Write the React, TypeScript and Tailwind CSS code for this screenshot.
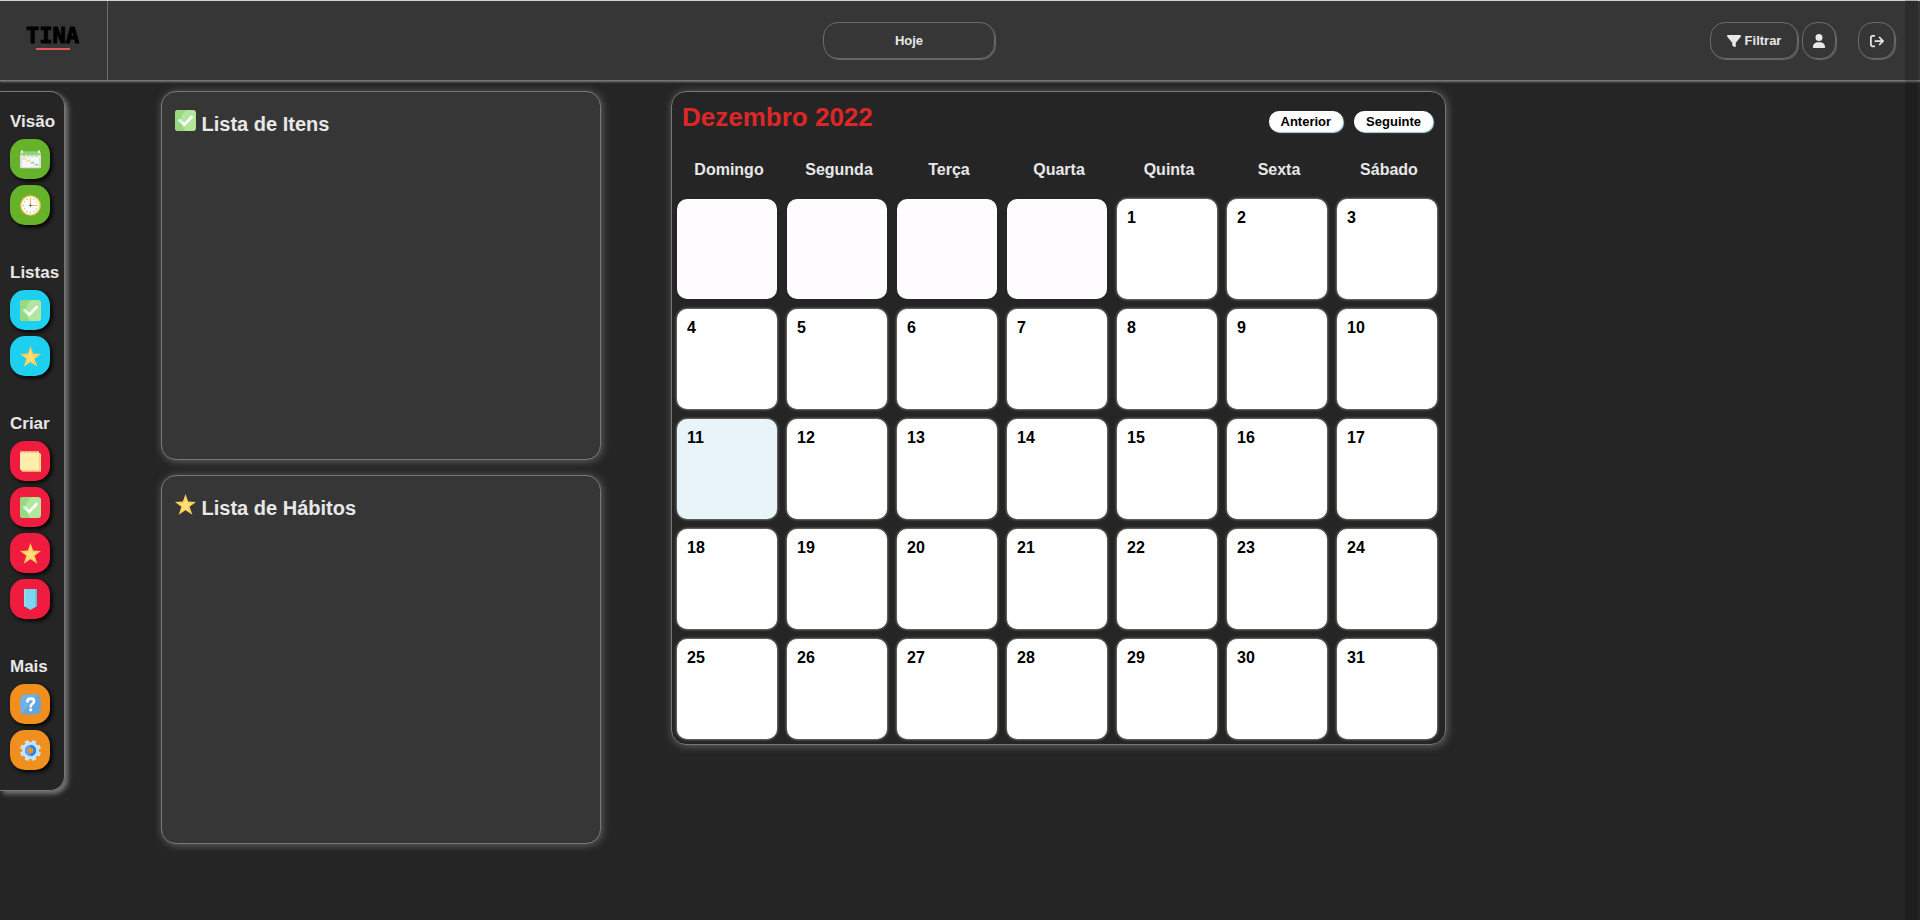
import type { ReactNode } from "react";
import { FaArrowRightFromBracket, FaFilter, FaUser } from "react-icons/fa6";

type IconProps = { className?: string };

const ICON = "size-[21px]";

function CheckIcon({ className = ICON }: IconProps) {
  return (
    <svg viewBox="0 0 63 63" className={className} aria-hidden="true">
      <rect width="63" height="63" rx="9" fill="#b2e69c" />
      <path d="M9 0h27C25 6 18 17 18 30s6 25 13 33H9a9 9 0 0 1-9-9V9a9 9 0 0 1 9-9z" fill="#98d97f" />
      <path d="M14 31l14 13 22-23" fill="none" stroke="#fff" strokeWidth="8" strokeLinecap="round" />
      <path d="M13 31l5 5" stroke="#c9f7f5" strokeWidth="8" strokeLinecap="round" />
    </svg>
  );
}

function StarIcon({ className = ICON }: IconProps) {
  return (
    <svg viewBox="0 0 63 63" className={className} aria-hidden="true">
      <path d="M31.5 0l8 22.5L63 24 44 38.5l8 23.5L31.5 49 11 62l8-23.5L0 24l23.5-1.5z" fill="#fbce5c" />
      <path d="M31.5 13l5 15 14 1-12 9 4 14-11-8-11 8 4-14-12-9 14-1z" fill="#ffdf7c" />
    </svg>
  );
}

function CalendarIcon() {
  return (
    <svg viewBox="0 0 63 63" className={ICON} aria-hidden="true">
      <rect y="8" width="63" height="50" rx="4" fill="#dedee6" />
      <path d="M0 12a4 4 0 0 1 4-4h55a4 4 0 0 1 4 4v6H0z" fill="#8fd67a" />
      <rect x="3" y="4" width="6" height="9" rx="2" fill="#ededf2" />
      <rect x="54" y="4" width="6" height="9" rx="2" fill="#ededf2" />
      <rect x="7" y="20" width="50" height="34" fill="#f8f8fb" />
      <path d="M9 21h8M21 21h8M33 21h8M45 21h9" stroke="#86c878" strokeWidth="3" />
      <path d="M9 29h9M21 35h9" stroke="#fadb84" strokeWidth="6" />
      <path d="M33 41h9M45 47h10" stroke="#a4dc90" strokeWidth="6" />
      <path d="M19 25v28M31 25v28M43 25v28" stroke="#e7e7ee" strokeWidth="2" />
    </svg>
  );
}

function ClockIcon() {
  const marks = [0, 30, 60, 90, 120, 150, 180, 210, 240, 270, 300, 330];
  return (
    <svg viewBox="0 0 63 63" className={ICON} aria-hidden="true">
      <circle cx="31.5" cy="31.5" r="31" fill="#fbc94e" />
      <circle cx="31.5" cy="31.5" r="27" fill="#fdfdff" />
      {marks.map((angle) => (
        <circle key={angle} cx="31.5" cy="10.5" r="1.6" fill="#8b8b95" transform={`rotate(${angle} 31.5 31.5)`} />
      ))}
      <path d="M31.5 9v20M34 31.5h20" stroke="#fbc03a" strokeWidth="3.5" />
      <path d="M31.5 26v11M26 31.5h11" stroke="#50505a" strokeWidth="2" />
    </svg>
  );
}

function NoteIcon() {
  return (
    <svg viewBox="0 0 63 63" className={ICON} aria-hidden="true">
      <rect x="6" y="8" width="57" height="54" fill="#e6e88a" />
      <rect x="3" y="6" width="57" height="53" fill="#f8cf80" />
      <rect y="1" width="57" height="55" fill="#ffedae" />
      <path d="M0 3h57" stroke="#f6a06a" strokeWidth="4" strokeDasharray="7 4" />
    </svg>
  );
}

function BookmarkIcon() {
  return (
    <svg viewBox="0 0 63 63" className={ICON} aria-hidden="true">
      <path d="M12 0h39v51L31.5 63 12 51z" fill="#7dd6ef" />
      <path d="M46 0h5v51l-5 3z" fill="#58bfe0" />
      <path d="M12 0h4v53l-4-2z" fill="#94e0f4" />
    </svg>
  );
}

function QuestionIcon() {
  return (
    <svg viewBox="0 0 63 63" className={ICON} aria-hidden="true">
      <path d="M10 3c14-3 29-3 43 0 4 1 6 4 7 7 4 14 4 29 0 43-1 3-3 6-7 7-14 3-29 3-43 0-4-1-6-4-7-7-4-14-4-29 0-43 1-3 3-6 7-7z" fill="#62a6dc" />
      <path d="M10 3c14-3 29-3 43 0L6 57c-2-1-3-3-3-4-4-14-4-29 0-43 1-3 3-6 7-7z" fill="#72b1e4" />
      <path d="M22 22c1-11 20-11 20 0 0 8-10 8-10 15" fill="none" stroke="#fff" strokeWidth="8" strokeLinecap="round" />
      <circle cx="32" cy="47.5" r="5" fill="#fff" />
    </svg>
  );
}

function GearIcon() {
  const teeth = [22.5, 67.5, 112.5, 157.5, 202.5, 247.5, 292.5, 337.5];
  return (
    <svg viewBox="0 0 63 63" className={ICON} aria-hidden="true">
      {teeth.map((angle) => (
        <rect key={angle} x="25" y="0" width="13" height="14" rx="2" fill="#c5e4fa" transform={`rotate(${angle} 31.5 31.5)`} />
      ))}
      <circle cx="31.5" cy="31.5" r="20" fill="none" stroke="#c5e4fa" strokeWidth="11" />
      <circle cx="31.5" cy="31.5" r="13" fill="none" stroke="#5b9cf8" strokeWidth="8" />
      <path d="M31.5 18.5a13 13 0 0 1 0 26" fill="none" stroke="#1e86f5" strokeWidth="8" />
    </svg>
  );
}

type Action = { label: string; icon: ReactNode };
type Group = { title: string; color: string; actions: Action[] };

const groups: Group[] = [
  {
    title: "Visão",
    color: "bg-[#66b22a]",
    actions: [
      { label: "Calendário", icon: <CalendarIcon /> },
      { label: "Dia", icon: <ClockIcon /> },
    ],
  },
  {
    title: "Listas",
    color: "bg-[#1dd0f0]",
    actions: [
      { label: "Lista de itens", icon: <CheckIcon /> },
      { label: "Lista de hábitos", icon: <StarIcon /> },
    ],
  },
  {
    title: "Criar",
    color: "bg-[#f01c40]",
    actions: [
      { label: "Criar nota", icon: <NoteIcon /> },
      { label: "Criar item", icon: <CheckIcon /> },
      { label: "Criar hábito", icon: <StarIcon /> },
      { label: "Criar marcador", icon: <BookmarkIcon /> },
    ],
  },
  {
    title: "Mais",
    color: "bg-[#f08e1e]",
    actions: [
      { label: "Ajuda", icon: <QuestionIcon /> },
      { label: "Configurações", icon: <GearIcon /> },
    ],
  },
];

const weekdays = ["Domingo", "Segunda", "Terça", "Quarta", "Quinta", "Sexta", "Sábado"];
const FIRST_WEEKDAY = 4;
const TODAY = 11;
const weeks = [0, 1, 2, 3, 4].map((week) =>
  weekdays.map((_, day) => week * 7 + day - FIRST_WEEKDAY + 1),
);

const headerButton =
  "flex h-[37px] items-center justify-center gap-1 rounded-[15px] border border-[#6c6c6c] text-[13px] font-bold shadow-[1px_1px_1px_#666]";
const navButton =
  "h-[21px] rounded-[10px] bg-white px-3 text-[13px] leading-[20px] font-bold text-black shadow-[1px_1px_1px_#add8e6]";

function Header() {
  return (
    <header className="flex h-[81px] items-center border-t border-b border-t-[#cfd2d0] border-b-[#777] bg-[#363636] shadow-[0_1px_2px_#777]">
      <a
        href="#"
        className="flex h-full w-[108px] shrink-0 flex-col items-center border-r border-[#6c6c6c] pt-[22px] pr-[2px] font-['DejaVu_Sans_Mono',monospace] text-[22px] leading-[25px] font-bold text-black [-webkit-text-stroke:1px_black]"
      >
        TINA
        <span className="h-[2px] w-[34px] bg-[#e4575d]" />
      </a>
      <div className="flex flex-1 justify-center">
        <button className={`${headerButton} w-[172px]`}>Hoje</button>
      </div>
      <div className="flex pr-[25px]">
        <button className={`${headerButton} w-[88px]`}>
          <FaFilter className="size-[14px]" />
          Filtrar
        </button>
        <button aria-label="Perfil" className={`${headerButton} ml-1 w-[34px]`}>
          <FaUser className="size-[14px]" />
        </button>
        <button aria-label="Sair" className={`${headerButton} ml-[22px] w-[37px]`}>
          <FaArrowRightFromBracket className="size-[14px]" />
        </button>
      </div>
    </header>
  );
}

function Sidebar() {
  return (
    <nav className="flex w-[65px] shrink-0 flex-col gap-[37px] rounded-r-[15px] border border-l-0 border-[#777] pt-[19px] pb-5 pl-[10px] shadow-[3px_3px_5px_#777]">
      {groups.map((group) => (
        <section key={group.title} className="flex flex-col gap-[6px]">
          <h2 className="text-[17px] leading-[22px] font-bold">{group.title}</h2>
          {group.actions.map((action) => (
            <button
              key={action.label}
              aria-label={action.label}
              className={`${group.color} flex size-10 items-center justify-center rounded-[15px] shadow-[2px_2px_4px_#000]`}
            >
              {action.icon}
            </button>
          ))}
        </section>
      ))}
    </nav>
  );
}

function ListCard({ title, icon }: { title: string; icon: ReactNode }) {
  return (
    <section className="h-[369px] rounded-[15px] border border-[#777] bg-[#363636] px-[13px] pt-[18px] shadow-[1px_1px_8px_#666]">
      <h2 className="text-xl leading-[24px] font-bold">
        {icon} {title}
      </h2>
    </section>
  );
}

function Calendar() {
  return (
    <section className="w-[775px] shrink-0 rounded-[15px] border border-[#777] shadow-[1px_1px_8px_#666]">
      <div className="flex h-[52px] items-start justify-between pr-[12px] pl-[10px]">
        <h1 className="pt-[9px] text-[26px] leading-[32px] font-bold text-[#dd2727]">Dezembro 2022</h1>
        <div className="flex gap-[11px] pt-[19px]">
          <button className={navButton}>Anterior</button>
          <button className={navButton}>Seguinte</button>
        </div>
      </div>
      <table className="border-collapse">
        <thead>
          <tr className="h-[50px]">
            {weekdays.map((name) => (
              <th key={name} scope="col" className="w-[110px] p-0 pt-[2px] pl-1 text-center text-base font-bold">
                {name}
              </th>
            ))}
          </tr>
        </thead>
        <tbody>
          {weeks.map((week) => (
            <tr key={week[0]}>
              {week.map((day) => (
                <td key={day} className="p-[5px]">
                  {day < 1 ? (
                    <div className="size-[100px] rounded-[10px] bg-[#fefcff]" />
                  ) : (
                    <div
                      className={`${day === TODAY ? "bg-[#e8f3fa]" : "bg-white"} size-[100px] rounded-[10px] p-[10px] text-base leading-[18px] font-bold text-black shadow-[0_0_3px_#c8c8b8]`}
                    >
                      {day}
                    </div>
                  )}
                </td>
              ))}
            </tr>
          ))}
        </tbody>
      </table>
    </section>
  );
}

export default function App() {
  return (
    <div className="relative min-h-screen bg-[#252525] font-['Liberation_Sans',Arial,sans-serif] text-[#e8e8e8]">
      <Header />
      <main className="flex items-start pt-[10px]">
        <Sidebar />
        <div className="ml-24 flex w-[440px] flex-col gap-[15px]">
          <ListCard title="Lista de Itens" icon={<CheckIcon className="inline size-[21px] align-baseline" />} />
          <ListCard title="Lista de Hábitos" icon={<StarIcon className="inline size-[21px] align-baseline" />} />
        </div>
        <div className="ml-[70px]">
          <Calendar />
        </div>
      </main>
      <div className="pointer-events-none absolute inset-y-0 right-[2px] w-[13px] bg-black/18" />
    </div>
  );
}
